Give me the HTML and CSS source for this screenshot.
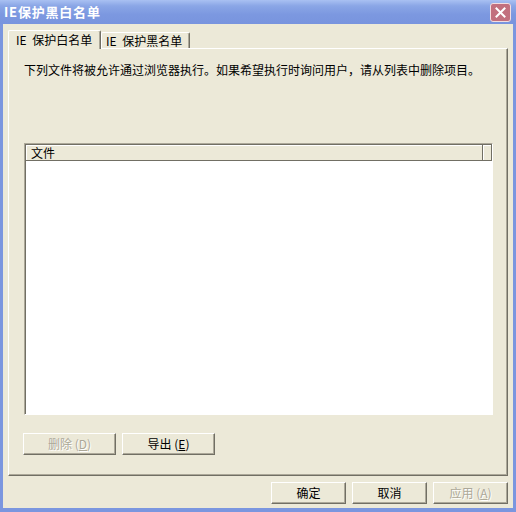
FILE: index.html
```html
<!DOCTYPE html>
<html>
<head>
<meta charset="utf-8">
<link rel="stylesheet" href="styles.css">
</head>
<body>
<div class="window">
  <div class="titlebar">
    <span class="title">IE保护黑白名单</span>
    <div class="close">
      <svg width="11" height="11" viewBox="0 0 11 11"><path d="M1.5 1.5 L9.5 9.5 M9.5 1.5 L1.5 9.5" stroke="#fff" stroke-width="2" stroke-linecap="square"/></svg>
    </div>
  </div>
  <div class="frame">
    <div class="tabs">
      <div class="tab active">IE 保护白名单</div>
      <div class="tab">IE 保护黑名单</div>
    </div>
    <div class="panel">
      <p class="desc">下列文件将被允许通过浏览器执行。如果希望执行时询问用户，请从列表中删除项目。</p>
      <div class="list">
        <div class="list-header">
          <div class="col">文件</div>
          <div class="col-rest"></div>
        </div>
        <div class="list-body"></div>
      </div>
      <div class="panel-buttons">
        <button class="btn wide" disabled>删除 (<u>D</u>)</button>
        <button class="btn wide">导出 (<u>E</u>)</button>
      </div>
    </div>
    <div class="dialog-buttons">
      <button class="btn">确定</button>
      <button class="btn">取消</button>
      <button class="btn" disabled>应用 (<u>A</u>)</button>
    </div>
  </div>
</div>
</body>
</html>
```
FILE: styles.css
```css
* { box-sizing: border-box; }
html, body { margin: 0; padding: 0; }
body {
  width: 516px;
  height: 512px;
  font-family: "Noto Sans CJK SC", "Liberation Sans", sans-serif;
  font-size: 12px;
  color: #000;
  background: #ece9d8;
}
.window {
  width: 516px;
  height: 512px;
  display: flex;
  flex-direction: column;
}
.titlebar {
  height: 24px;
  display: flex;
  align-items: center;
  justify-content: space-between;
  padding: 0 5px 0 4px;
  background: linear-gradient(to bottom, #a9c1f2 0%, #8aa6e6 25%, #7c98e0 60%, #7894de 100%);
}
.title {
  color: #fff;
  font-weight: bold;
  font-size: 13px;
  line-height: 16px;
  letter-spacing: 0.8px;
}
.close {
  width: 21px;
  height: 19px;
  margin-top: 1px;
  border: 1px solid #f2dde0;
  border-radius: 3px;
  background: #c2707e;
  display: flex;
  align-items: center;
  justify-content: center;
}
.frame {
  flex: 1;
  border-left: 3px solid #7b96df;
  border-right: 3px solid #7b96df;
  border-bottom: 4px solid #7b96df;
  background: #ece9d8;
  padding: 6px 5px 0 5px;
  display: flex;
  flex-direction: column;
}
.tabs {
  height: 18px;
  display: flex;
  align-items: flex-end;
  position: relative;
  z-index: 1;
}
.tab {
  width: 89px;
  height: 16px;
  line-height: 15px;
  padding: 0 0 0 4px;
  border-top: 1px solid #fff;
  border-left: 1px solid #fff;
  border-right: 1px solid #716f64;
  box-shadow: inset -1px 0 #aca899;
  border-radius: 2px 2px 0 0;
  background: #ece9d8;
  white-space: nowrap;
  word-spacing: 3px;
}
.tab.active {
  width: 93px;
  height: 19px;
  margin-bottom: -1px;
  padding: 0 0 0 7px;
  line-height: 18px;
}
.panel {
  height: 428px;
  border-top: 1px solid #fff;
  border-left: 1px solid #fff;
  border-right: 1px solid #716f64;
  border-bottom: 1px solid #716f64;
  box-shadow: inset -1px -1px #aca899;
  padding: 13px 14px 0 15px;
  display: flex;
  flex-direction: column;
}
.desc {
  margin: 0;
  height: 16px;
  line-height: 16px;
  white-space: nowrap;
}
.list {
  margin-top: 65px;
  height: 272px;
  border-top: 1px solid #aca899;
  border-left: 1px solid #aca899;
  border-right: 1px solid #fff;
  border-bottom: 1px solid #fff;
  box-shadow: inset 1px 1px #716f64;
  padding: 1px 0 0 1px;
  background: #fff;
  display: flex;
  flex-direction: column;
}
.list-header {
  height: 16px;
  display: flex;
  background: #ece9d8;
}
.col, .col-rest {
  height: 16px;
  line-height: 15px;
  box-shadow: inset -1px -1px #716f64, inset 1px 1px #fff;
}
.col {
  width: 457px;
  padding-left: 5px;
}
.col-rest { flex: 1; }
.list-body { flex: 1; background: #fff; }
.panel-buttons {
  margin-top: 18px;
  margin-left: -1px;
  display: flex;
  gap: 6px;
}
.btn {
  width: 75px;
  height: 22px;
  padding: 0;
  font-family: inherit;
  font-size: 12px;
  color: #000;
  background: #ece9d8;
  border-top: 1px solid #fff;
  border-left: 1px solid #fff;
  border-right: 1px solid #716f64;
  border-bottom: 1px solid #716f64;
  box-shadow: inset -1px -1px #aca899;
  border-radius: 0;
  line-height: 18px;
}
.btn.wide { width: 93px; }
.btn:disabled {
  color: #aca899;
  text-shadow: 1px 1px #fff;
}
.btn u { text-decoration: underline; }
.dialog-buttons {
  margin-top: 6px;
  display: flex;
  justify-content: flex-end;
  gap: 6px;
}
```
